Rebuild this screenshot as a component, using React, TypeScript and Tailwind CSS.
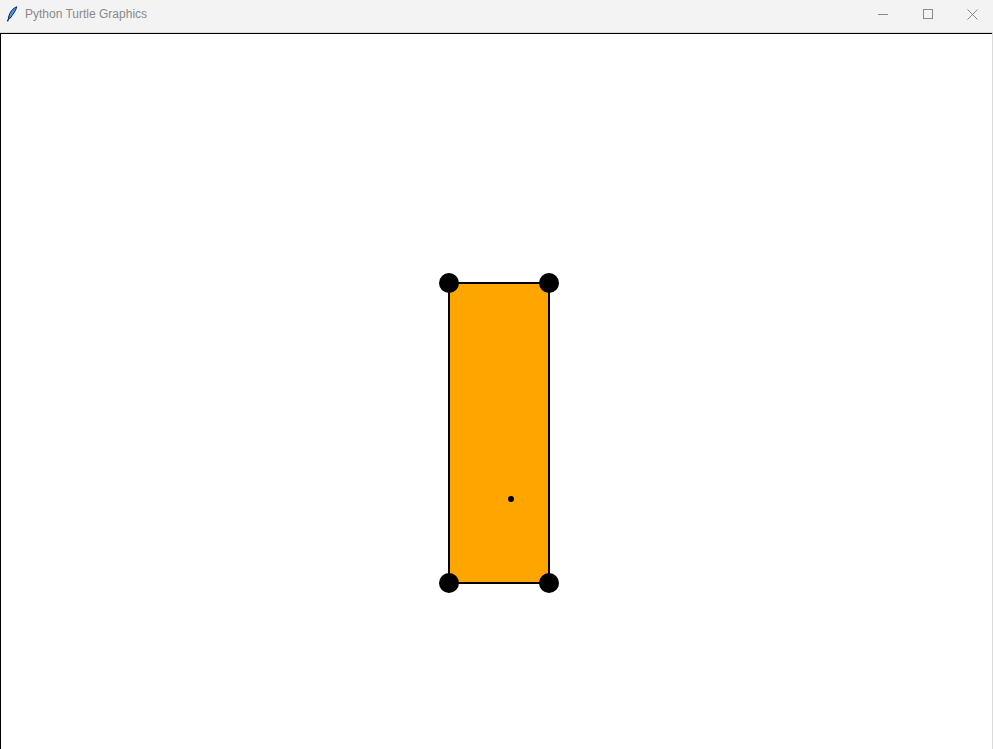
import React from "react";

function Feather() {
  return (
    <svg width="12" height="16" viewBox="0 0 12 16">
      <path d="M10.8 0.8 C7 2 3.5 6 2.4 12.2 L4.2 12.2 C6.5 9 9.8 5 10.8 0.8 Z" fill="#4a8fe0" stroke="#0b2a5a" strokeWidth="1" />
      <path d="M3 12 L1.4 15.4" stroke="#0b2a5a" strokeWidth="1.3" />
    </svg>
  );
}

export default function App() {
  return (
    <div className="w-[993px] h-[749px] bg-white flex flex-col overflow-hidden">
      <div className="h-[32px] pb-[4px] bg-[#f3f3f3] flex items-center shrink-0">
        <div className="w-[25px] flex justify-center pl-[1px] pr-[2px]">
          <Feather />
        </div>
        <span className="text-[12px] text-[#8a8a8a] leading-none" style={{ fontFamily: '"Liberation Sans", Arial, sans-serif' }}>Python Turtle Graphics</span>
        <div className="ml-auto mr-[-2px] flex h-full">
          <div className="w-[45px] flex items-center justify-center">
            <svg width="10" height="10" viewBox="0 0 10 10"><path d="M0 5.5 H10" stroke="#8a8a8a" strokeWidth="1" /></svg>
          </div>
          <div className="w-[45px] flex items-center justify-center">
            <svg width="10" height="10" viewBox="0 0 10 10"><rect x="0.5" y="0.5" width="9" height="9" fill="none" stroke="#8a8a8a" strokeWidth="1" /></svg>
          </div>
          <div className="w-[45px] flex items-center justify-center">
            <svg width="11" height="11" viewBox="0 0 11 11"><path d="M0.5 0.5 L10.5 10.5 M10.5 0.5 L0.5 10.5" stroke="#8a8a8a" strokeWidth="1" /></svg>
          </div>
        </div>
      </div>
      <div className="h-[1px] bg-[#dadada] shrink-0" />
      <div className="flex flex-1 min-h-0">
        <div className="w-[992px] border-t-[1px] border-l-[1px] border-black bg-white">
          <svg width="991" height="715" className="block">
            <rect x="448" y="249" width="100" height="300" fill="#ffa500" stroke="#000" strokeWidth="2" />
            <circle cx="448" cy="249" r="10" fill="#000" />
            <circle cx="548" cy="249" r="10" fill="#000" />
            <circle cx="448" cy="549" r="10" fill="#000" />
            <circle cx="548" cy="549" r="10" fill="#000" />
            <circle cx="510" cy="465" r="3" fill="#000" />
          </svg>
        </div>
        <div className="w-[1px] bg-[#dadada]" />
      </div>
    </div>
  );
}
